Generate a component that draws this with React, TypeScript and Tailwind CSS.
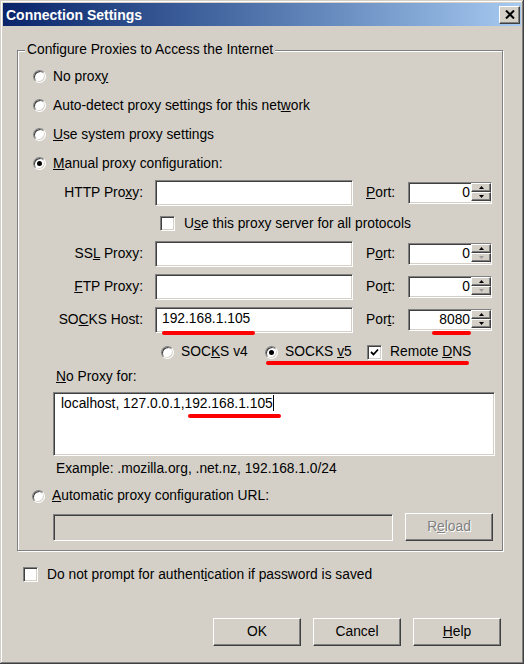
import React from 'react';

const sunken =
  'border border-t-[#808080] border-l-[#808080] border-b-white border-r-white shadow-[inset_1px_1px_0_#404040,inset_-1px_-1px_0_#d4d0c8]';
const raised =
  'border border-t-white border-l-white border-b-[#404040] border-r-[#404040] shadow-[inset_-1px_-1px_0_#808080]';

const Radio: React.FC<{ checked?: boolean }> = ({ checked }) => (
  <span
    className={`w-[13px] h-[13px] rounded-full bg-white shrink-0 flex items-center justify-center ${sunken}`}
  >
    {checked && <span className="w-[5px] h-[5px] rounded-full bg-black" />}
  </span>
);

const Check: React.FC<{ checked?: boolean }> = ({ checked }) => (
  <span className={`w-[15px] h-[15px] bg-white shrink-0 flex items-center justify-center ${sunken}`}>
    {checked && (
      <svg width="9" height="9" viewBox="0 0 9 9">
        <path d="M1 4 L3.5 6.5 L8 1.5" stroke="#000" strokeWidth="1.8" fill="none" />
      </svg>
    )}
  </span>
);

const Arrow: React.FC<{ up?: boolean; dim?: boolean }> = ({ up, dim }) => (
  <svg width="5" height="3" viewBox="0 0 5 3">
    <path d={up ? 'M0 3 L2.5 0 L5 3 Z' : 'M0 0 L5 0 L2.5 3 Z'} fill={dim ? '#9a9a9a' : '#000'} />
  </svg>
);

const Spinner: React.FC<{ value: string; dimDown?: boolean }> = ({ value, dimDown }) => (
  <div className={`flex w-[84px] h-[22px] bg-white ${sunken}`}>
    <div className="flex-1 text-right pr-[1px] leading-[18px] pt-[1px]">{value}</div>
    <div className="flex flex-col w-[20px]">
      <div className={`h-[9px] bg-[#d4d0c8] flex items-center justify-center ${raised}`}>
        <Arrow up />
      </div>
      <div className={`h-[9px] bg-[#d4d0c8] flex items-center justify-center ${raised}`}>
        <Arrow dim={dimDown} />
      </div>
    </div>
  </div>
);

const ProxyRow: React.FC<{ label: React.ReactNode; value?: string; port: React.ReactNode; portValue: string; dimDown?: boolean; className?: string }> = ({
  label,
  value,
  port,
  portValue,
  dimDown,
  className,
}) => (
  <div className={`flex items-center h-[26px] ${className ?? ''}`}>
    <div className="w-[125px] text-right">{label}</div>
    <div className={`ml-[12px] w-[198px] h-[26px] bg-white pl-[6px] leading-[22px] ${sunken}`}>{value}</div>
    <div className="ml-[13px] w-[42px]">{port}</div>
    <Spinner value={portValue} dimDown={dimDown} />
  </div>
);

const RadioRow: React.FC<{ checked?: boolean; children: React.ReactNode }> = ({ checked, children }) => (
  <div className="flex items-center h-[29px] gap-[7px]">
    <Radio checked={checked} />
    <span>{children}</span>
  </div>
);

const Button: React.FC<{ children: React.ReactNode; className?: string }> = ({ children, className }) => (
  <div className={`w-[88px] h-[28px] flex items-center justify-center bg-[#d4d0c8] ${raised} ${className ?? ''}`}>
    {children}
  </div>
);

export default function App() {
  return (
    <div className="relative w-[524px] h-[664px] bg-[#d4d0c8] p-[3px] flex flex-col text-black text-[13.8px] leading-[18px] font-['Liberation_Sans',Arial,sans-serif] shadow-[inset_-1px_-1px_0_#404040,inset_1px_1px_0_#d4d0c8,inset_-2px_-2px_0_#808080,inset_2px_2px_0_#fff]">
      {/* title bar */}
      <div className="h-[23px] flex items-center justify-between pl-[3px] pr-[1px] bg-linear-to-r from-[#0a246a] to-[#a6caf0]">
        <span className="text-white font-bold text-[14px]">Connection Settings</span>
        <div className={`w-[21px] h-[18px] bg-[#d4d0c8] flex items-center justify-center ${raised}`}>
          <svg width="10" height="9" viewBox="0 0 10 9">
            <path d="M1 0.5 L9 8.5 M9 0.5 L1 8.5" stroke="#000" strokeWidth="2" />
          </svg>
        </div>
      </div>

      <div className="flex flex-col px-[14px]">
        {/* group box */}
        <div className="relative mt-[24px] w-[486px] h-[501px] border border-[#808080] shadow-[1px_1px_0_#fff,inset_1px_1px_0_#fff]">
          <span className="absolute -top-[10px] left-[7px] px-[2px] bg-[#d4d0c8]">Configure Proxies to Access the Internet</span>

          <div className="pt-[11px] pl-[15px]">
            <RadioRow>
              No prox<u>y</u>
            </RadioRow>
            <RadioRow>Auto-detect proxy settings for this net<u>w</u>ork</RadioRow>
            <RadioRow>
              <u>U</u>se system proxy settings
            </RadioRow>
            <RadioRow checked>
              <u>M</u>anual proxy configuration:
            </RadioRow>
          </div>

          <ProxyRow
            className="mt-[2px]"
            label={<>HTTP Pro<u>x</u>y:</>}
            port={<><u>P</u>ort:</>}
            portValue="0"
          />
          <div className="flex items-center h-[35px] pl-[142px] gap-[9px]">
            <Check />
            <span>
              U<u>s</u>e this proxy server for all protocols
            </span>
          </div>
          <ProxyRow label={<>SS<u>L</u> Proxy:</>} port={<>P<u>o</u>rt:</>} portValue="0" dimDown />
          <ProxyRow className="mt-[7px]" label={<><u>F</u>TP Proxy:</>} port={<>Po<u>r</u>t:</>} portValue="0" dimDown />
          <ProxyRow
            className="mt-[7px]"
            label={<>SO<u>C</u>KS Host:</>}
            value="192.168.1.105"
            port={<>Por<u>t</u>:</>}
            portValue="8080"
          />

          <div className="flex items-center h-[22px] mt-[8px] pl-[143px]">
            <div className="w-[104px] flex items-center gap-[7px]">
              <Radio />
              <span>
                SOC<u>K</u>S v4
              </span>
            </div>
            <div className="w-[102px] flex items-center gap-[7px]">
              <Radio checked />
              <span>
                SOCKS <u>v</u>5
              </span>
            </div>
            <div className="flex items-center gap-[8px]">
              <Check checked />
              <span>
                Remote <u>D</u>NS
              </span>
            </div>
          </div>

          <div className="h-[18px] mt-[5px] pl-[38px]">
            <u>N</u>o Proxy for:
          </div>
          <div className={`ml-[35px] mt-[6px] w-[442px] h-[64px] bg-white pl-[7px] pt-[2px] ${sunken}`}>
            localhost, 127.0.0.1,192.168.1.105
            <span className="inline-block w-px h-[16px] bg-black align-[-3px]" />
          </div>
          <div className="h-[18px] mt-[4px] pl-[38px]">Example: .mozilla.org, .net.nz, 192.168.1.0/24</div>

          <div className="flex items-center h-[20px] mt-[8px] pl-[14px] gap-[7px]">
            <Radio />
            <span>
              <u>A</u>utomatic proxy configuration URL:
            </span>
          </div>
          <div className="flex items-center mt-[7px] pl-[35px]">
            <div className={`w-[340px] h-[27px] bg-[#d4d0c8] ${sunken}`} />
            <Button className="ml-[12px] text-[#808080] [text-shadow:1px_1px_0_#fff]">
              <span>
                R<u>e</u>load
              </span>
            </Button>
          </div>
        </div>

        <div className="flex items-center h-[15px] mt-[16px] pl-[6px] gap-[9px]">
          <Check />
          <span>
            Do not prompt for authent<u>i</u>cation if password is saved
          </span>
        </div>

        <div className="flex justify-end gap-[12px] mt-[36px] pr-[6px]">
          <Button>OK</Button>
          <Button>Cancel</Button>
          <Button>
            <span>
              <u>H</u>elp
            </span>
          </Button>
        </div>
      </div>

      {/* red annotation marks drawn over the screenshot */}
      <span className="absolute left-[162px] top-[331px] w-[93px] h-[4px] rounded-full bg-[#f00]" />
      <span className="absolute left-[432px] top-[331px] w-[39px] h-[4px] rounded-full bg-[#f00]" />
      <span className="absolute left-[266px] top-[361px] w-[203px] h-[4px] rounded-full bg-[#f00]" />
      <span className="absolute left-[188px] top-[414px] w-[93px] h-[4px] rounded-full bg-[#f00]" />
    </div>
  );
}
